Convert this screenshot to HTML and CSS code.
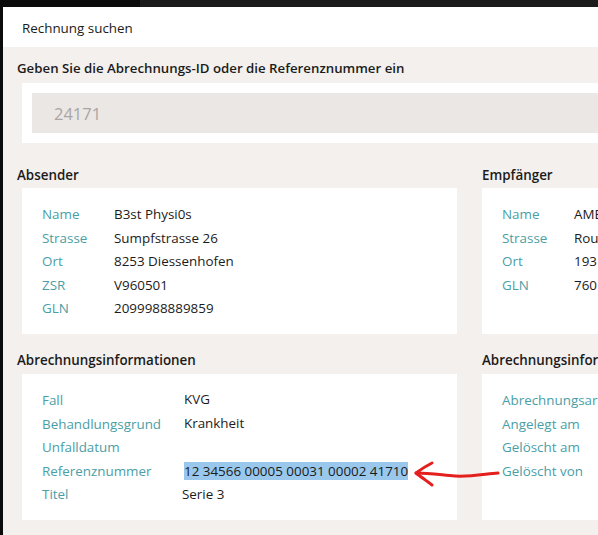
FILE: index.html
```html
<!DOCTYPE html>
<html lang="de">
<head>
<meta charset="utf-8">
<title>Rechnung suchen</title>
<link rel="stylesheet" href="styles.css">
</head>
<body>
<div class="screen">
  <div class="topbar"><div class="topbar-left"></div><div class="topbar-right"></div></div>
  <div class="main">
    <div class="leftstrip"></div>
    <div class="dialog">
      <div class="dialog-header">Rechnung suchen</div>
      <div class="dialog-body">
        <div class="prompt">Geben Sie die Abrechnungs-ID oder die Referenznummer ein</div>
        <div class="search-box">
          <div class="search-input">24171</div>
        </div>

        <div class="cols">
          <div class="col col-left">
            <div class="heading">Absender</div>
            <div class="card grid-short">
              <div class="lbl">Name</div><div class="val">B3st Physi0s</div>
              <div class="lbl">Strasse</div><div class="val">Sumpfstrasse 26</div>
              <div class="lbl">Ort</div><div class="val">8253 Diessenhofen</div>
              <div class="lbl">ZSR</div><div class="val">V960501</div>
              <div class="lbl">GLN</div><div class="val">2099988889859</div>
            </div>
          </div>
          <div class="col col-right">
            <div class="heading">Empfänger</div>
            <div class="card grid-short">
              <div class="lbl">Name</div><div class="val">AMB</div>
              <div class="lbl">Strasse</div><div class="val">Rou</div>
              <div class="lbl">Ort</div><div class="val">193</div>
              <div class="lbl">GLN</div><div class="val">760</div>
            </div>
          </div>
        </div>

        <div class="cols cols-second">
          <div class="col col-left">
            <div class="heading">Abrechnungsinformationen</div>
            <div class="card grid-long">
              <div class="lbl">Fall</div><div class="val val-up">KVG</div>
              <div class="lbl">Behandlungsgrund</div><div class="val val-up">Krankheit</div>
              <div class="lbl">Unfalldatum</div><div class="val"></div>
              <div class="lbl">Referenznummer</div><div class="val"><span class="selected">12 34566 00005 00031 00002 41710</span></div>
              <div class="lbl">Titel</div><div class="val val-shift">Serie 3</div>
            </div>
          </div>
          <div class="col col-right">
            <div class="heading">Abrechnungsinfor</div>
            <div class="card grid-long">
              <div class="lbl">Abrechnungsart</div><div class="val"></div>
              <div class="lbl">Angelegt am</div><div class="val"></div>
              <div class="lbl">Gelöscht am</div><div class="val"></div>
              <div class="lbl">Gelöscht von</div><div class="val"></div>
            </div>
          </div>
        </div>
      </div>
    </div>
  </div>
  <svg class="annotation" width="598" height="535" viewBox="0 0 598 535">
    <path d="M498 473 C485 474 470 477 455 476 C442 475 430 473 416 473" />
    <path d="M432 463 C426 466 420 470 416 473 C421 477 427 481 432 485" />
  </svg>
</div>
</body>
</html>
```
FILE: styles.css
```css
html, body {
  margin: 0;
  padding: 0;
  width: 598px;
  height: 535px;
  overflow: hidden;
  background: #0b0b0b;
}

.screen {
  position: relative;
  width: 598px;
  height: 535px;
  overflow: hidden;
  font-family: "Open Sans", "Noto Sans", "Liberation Sans", sans-serif;
  color: #1b1b1b;
}

.topbar {
  display: flex;
  height: 7px;
}
.topbar-left {
  width: 140px;
  background: #0b0b0b;
}
.topbar-right {
  flex: 1;
  background: #1b1b1b;
}

.main {
  display: flex;
  height: 528px;
}
.leftstrip {
  width: 3px;
  flex: none;
  background: #0b0b0b;
}

.dialog {
  width: 940px;
  flex: none;
  display: flex;
  flex-direction: column;
}

.dialog-header {
  height: 40px;
  box-sizing: border-box;
  background: #ffffff;
  padding: 1px 0 0 19px;
  font-size: 13.4px;
  display: flex;
  align-items: center;
}

.dialog-body {
  flex: 1;
  background: #f3f0ed;
  padding: 11px 0 0 14px;
}

.prompt {
  font-size: 13.25px;
  font-weight: 600;
  line-height: 20px;
  height: 20px;
  margin-bottom: 5px;
  white-space: nowrap;
}

.search-box {
  margin-left: 5px;
  background: #ffffff;
  padding: 10px 0 10px 10px;
}
.search-input {
  height: 40px;
  background: #ebe7e4;
  padding-left: 22px;
  display: flex;
  align-items: center;
  font-size: 16.5px;
  color: #a9a5a3;
}

.cols {
  display: grid;
  grid-template-columns: 440px 440px;
  column-gap: 25px;
  margin-top: 22px;
}
.cols-second {
  margin-top: 16px;
}

.heading {
  font-size: 13.4px;
  font-weight: 600;
  line-height: 20px;
  height: 20px;
  margin-bottom: 3px;
  white-space: nowrap;
}
.cols-second .heading {
  margin-bottom: 4px;
}

.card {
  background: #ffffff;
  height: 146px;
  box-sizing: border-box;
  padding: 15px 0 0 20px;
  display: grid;
  grid-auto-rows: 23.5px;
  align-content: start;
  font-size: 13.4px;
  line-height: 23.5px;
  white-space: nowrap;
  overflow: hidden;
}
.col-left .card {
  margin-left: 5px;
}

.grid-short {
  grid-template-columns: 72px 1fr;
}
.grid-long {
  grid-template-columns: 142px 1fr;
}

.lbl {
  color: #4a9ea6;
}
.val {
  color: #1b1b1b;
}
.val-up {
  position: relative;
  top: -1px;
}
.val-shift {
  margin-left: -2px;
}

.selected {
  background: #99c8ec;
}

.annotation {
  position: absolute;
  left: 0;
  top: 0;
  pointer-events: none;
}
.annotation path {
  fill: none;
  stroke: #e4201e;
  stroke-width: 3;
  stroke-linecap: round;
  stroke-linejoin: round;
}
```
